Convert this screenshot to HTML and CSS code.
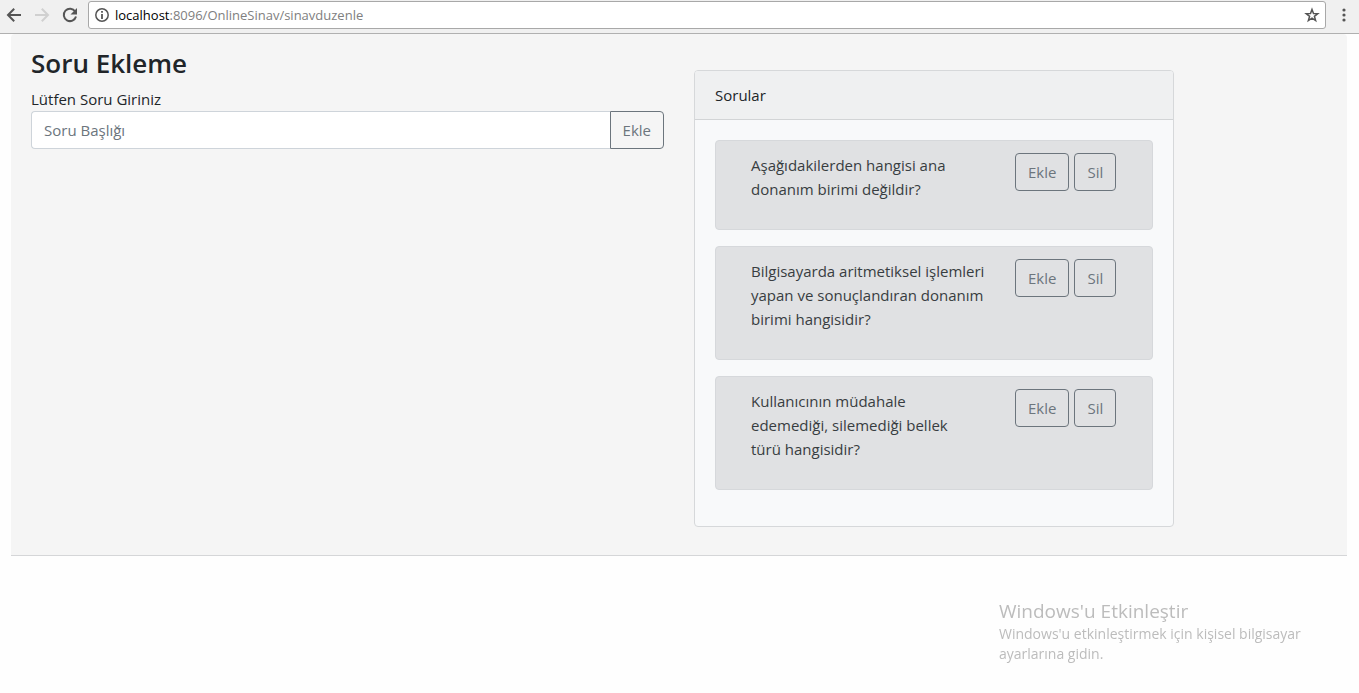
FILE: index.html
```html
<!DOCTYPE html>
<html lang="tr">
<head>
<meta charset="utf-8">
<title>Soru Ekleme</title>
<link rel="stylesheet" href="styles.css">
</head>
<body>
<header class="toolbar">
  <button class="tool" type="button" aria-label="Geri">
    <svg width="16" height="16" viewBox="0 0 16 16" fill="none" stroke="#555" stroke-width="2"><path d="M15 8H2.5M8.2 1.8L2 8l6.2 6.2"/></svg>
  </button>
  <button class="tool" type="button" aria-label="İleri" disabled>
    <svg width="16" height="16" viewBox="0 0 16 16" fill="none" stroke="#d0d0d0" stroke-width="2"><path d="M1 8h12.500M7.800 1.800L14 8l-6.200 6.200"/></svg>
  </button>
  <button class="tool" type="button" aria-label="Yenile">
    <svg width="16" height="16" viewBox="0 0 16 16"><path d="M13.200 4.500A6.200 6.200 0 1 0 14 9.500" fill="none" stroke="#555" stroke-width="2"/><path d="M15 1v6.500H8.500z" fill="#555"/></svg>
  </button>
  <div class="address">
    <svg width="14" height="14" viewBox="0 0 14 14"><circle cx="7" cy="7" r="6.200" fill="none" stroke="#555" stroke-width="1.500"/><path d="M6.100 6h1.800v5H6.100zM6.100 3h1.800v1.800H6.100z" fill="#555"/></svg>
    <div class="url" role="textbox" aria-label="Adres" contenteditable="true" spellcheck="false"><span class="host">localhost</span>:8096/OnlineSinav/sinavduzenle</div>
    <button class="tool" type="button" aria-label="Yer işareti ekle">
      <svg width="16" height="16" viewBox="0 0 16 16"><path d="M8 2.400l1.500 4 4.300.2-3.400 2.700 1.200 4.200L8 11.100l-3.600 2.400 1.200-4.200-3.400-2.700 4.300-.2z" fill="none" stroke="#555" stroke-width="1.500"/></svg>
    </button>
  </div>
  <button class="tool" type="button" aria-label="Menü">
    <svg width="16" height="16" viewBox="0 0 16 16" fill="#555"><circle cx="8" cy="3" r="1.600"/><circle cx="8" cy="8" r="1.600"/><circle cx="8" cy="13" r="1.600"/></svg>
  </button>
</header>

<main class="panel">
  <form class="question-form">
    <h1 class="title">Soru Ekleme</h1>
    <label class="label" for="question">Lütfen Soru Giriniz</label>
    <div class="input-group">
      <input class="input" id="question" type="text" placeholder="Soru Başlığı">
      <button class="btn btn-end" type="button">Ekle</button>
    </div>
  </form>

  <section class="card">
    <h2 class="card-header">Sorular</h2>
    <ul class="questions">
      <li class="question">
        <p class="question-text">Aşağıdakilerden hangisi ana donanım birimi değildir?</p>
        <div class="actions"><button class="btn" type="button">Ekle</button><button class="btn" type="button">Sil</button></div>
      </li>
      <li class="question">
        <p class="question-text">Bilgisayarda aritmetiksel işlemleri yapan ve sonuçlandıran donanım birimi hangisidir?</p>
        <div class="actions"><button class="btn" type="button">Ekle</button><button class="btn" type="button">Sil</button></div>
      </li>
      <li class="question">
        <p class="question-text">Kullanıcının müdahale edemediği, silemediği bellek<br>türü hangisidir?</p>
        <div class="actions"><button class="btn" type="button">Ekle</button><button class="btn" type="button">Sil</button></div>
      </li>
    </ul>
  </section>
</main>

<aside class="activation">
  <p class="activation-title">Windows'u Etkinleştir</p>
  <p class="activation-text">Windows'u etkinleştirmek için kişisel bilgisayar ayarlarına gidin.</p>
</aside>
</body>
</html>
```
FILE: styles.css
```css
* {
  box-sizing: border-box;
}

body {
  margin: 0;
  background: #fefefe;
  color: #212529;
  font: 15px/24px "Open Sans", "Noto Sans", sans-serif;
}

h1, h2, p, ul {
  margin: 0;
  padding: 0;
}

button, input {
  font: inherit;
}

.toolbar {
  display: flex;
  align-items: center;
  gap: 12px;
  height: 34px;
  padding: 0 7px 3px 6px;
  background: #f0f0f0;
  border-bottom: 1px solid #b0b0b0;
}

.tool {
  display: flex;
  flex: none;
  padding: 0;
  border: 0;
  background: none;
}

.address {
  display: flex;
  flex: 1;
  align-items: center;
  gap: 6px;
  height: 28px;
  margin-left: -2px;
  margin-right: -2px;
  padding: 0 5px 0 6px;
  background: #fff;
  border: 1px solid #a8a8a8;
  border-radius: 3px;
}

.url {
  flex: 1;
  color: #808080;
  font-size: 13px;
  white-space: nowrap;
  outline: 0;
}

.host {
  color: #000;
}

.panel {
  display: grid;
  grid-template-columns: 1fr 1fr;
  align-items: start;
  gap: 30px;
  margin: 0 12px 0 11px;
  padding: 12px 20px 28px;
  background: #f5f5f5;
  border-bottom: 1px solid #d5d6d8;
  border-radius: 4px 4px 0 0;
}

.title {
  margin-bottom: 7px;
  font-size: 26px;
  font-weight: 600;
  line-height: 34px;
}

.label {
  display: block;
}

.input-group {
  display: flex;
}

.input {
  flex: 1;
  min-width: 0;
  height: 38px;
  padding: 0 12px;
  color: #495057;
  background: #fff;
  border: 1px solid #ced4da;
  border-right: 0;
  border-radius: 4px 0 0 4px;
}

.input::placeholder {
  color: #6c757d;
}

.btn {
  height: 38px;
  padding: 0 12px;
  color: #6c757d;
  background: transparent;
  border: 1px solid #6c757d;
  border-radius: 4px;
}

.btn-end {
  border-radius: 0 4px 4px 0;
}

.card {
  max-width: 480px;
  margin-top: 24px;
  background: #f8f9fa;
  border: 1px solid #d6d8da;
  border-radius: 4px;
}

.card-header {
  padding: 12px 20px;
  background: #eff0f1;
  border-bottom: 1px solid #d2d4d6;
  border-radius: 3px 3px 0 0;
  font-size: 15px;
  font-weight: 400;
}

.questions {
  padding: 20px 20px 36px;
  display: grid;
  gap: 16px;
  list-style: none;
}

.question {
  display: grid;
  grid-template-columns: 2fr 1fr;
  padding: 12px 20px;
  color: #383d41;
  background: #e0e1e3;
  border: 1px solid #d6d8db;
  border-radius: 4px;
}

.question-text {
  padding: 0 15px;
  margin-bottom: 16px;
}

.actions {
  display: flex;
  align-items: flex-start;
  gap: 5px;
  padding-left: 15px;
}

.activation {
  position: fixed;
  right: 40px;
  bottom: 29px;
  width: 320px;
  color: #bcbcbc;
  font-size: 14px;
  line-height: 20px;
}

.activation-title {
  font-size: 19px;
  line-height: 26px;
}
```
